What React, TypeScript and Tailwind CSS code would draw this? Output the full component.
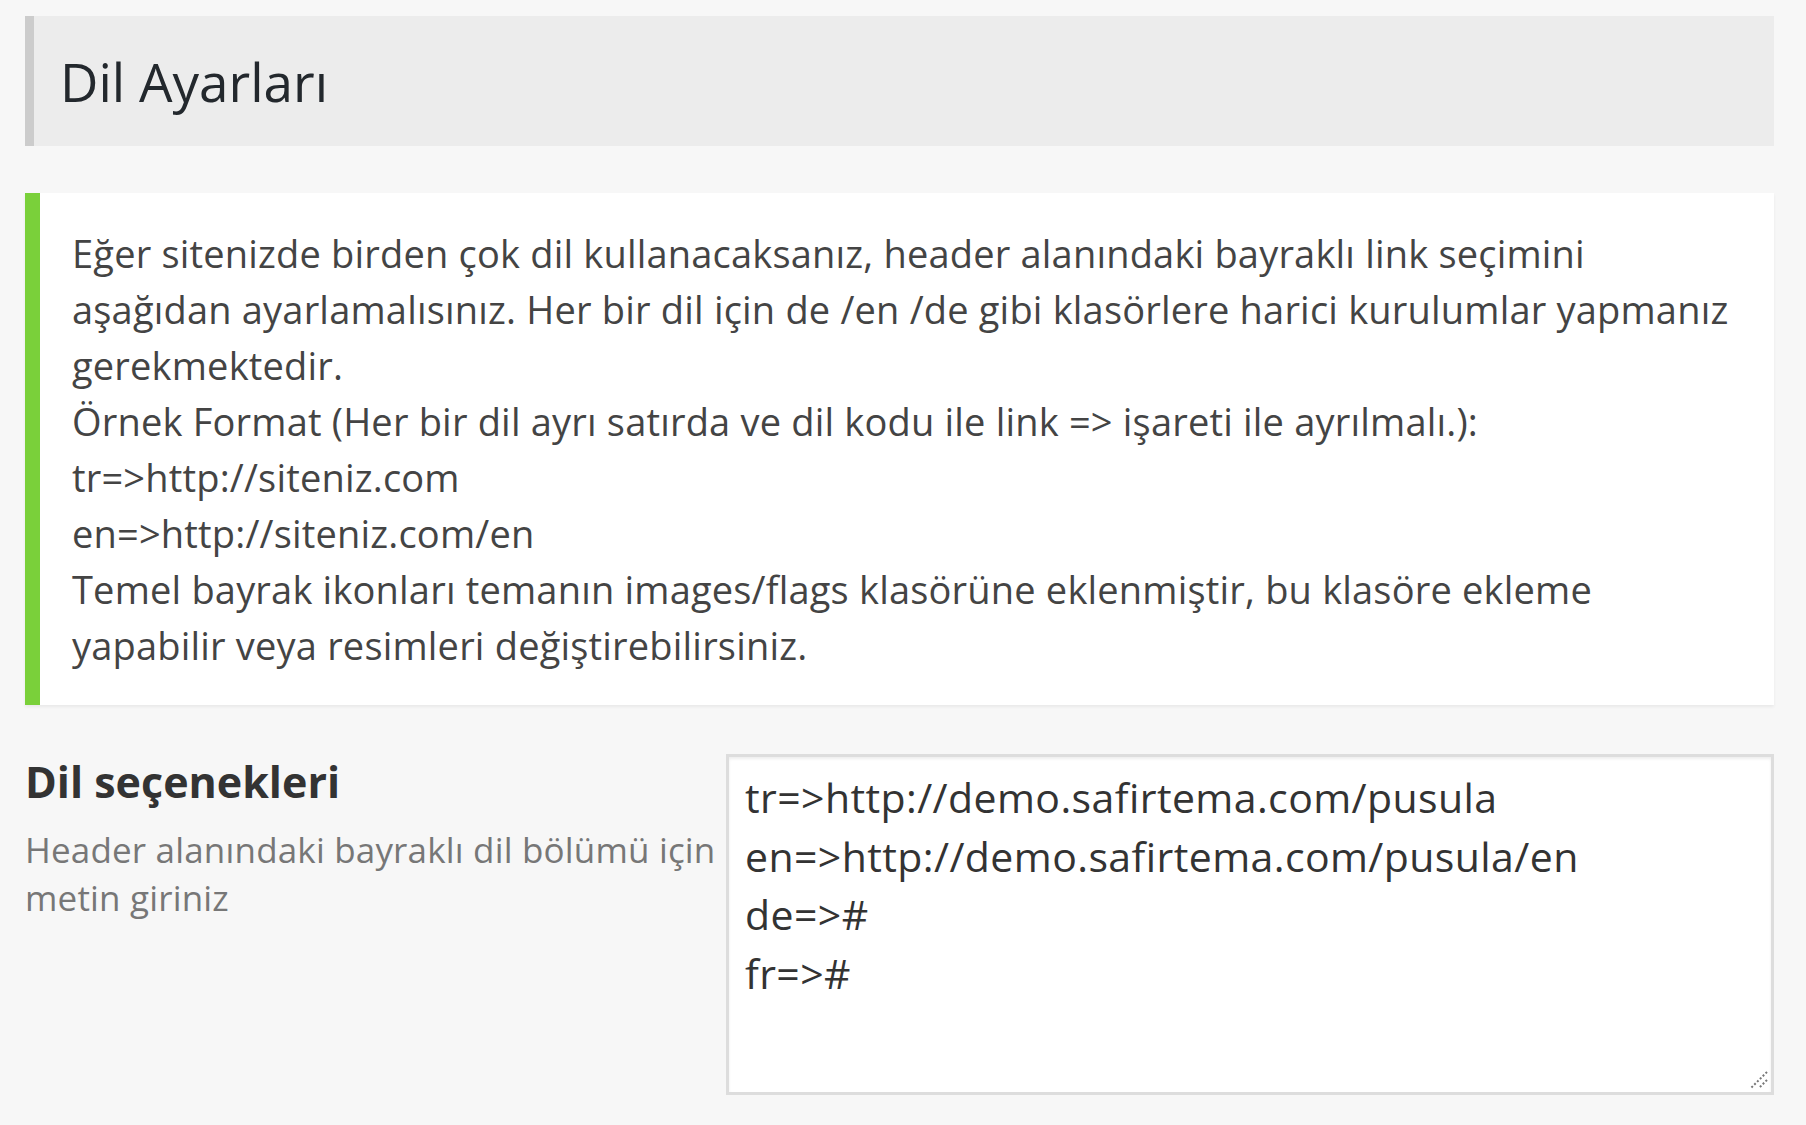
const notice = [
  "Eğer sitenizde birden çok dil kullanacaksanız, header alanındaki bayraklı link seçimini",
  "aşağıdan ayarlamalısınız. Her bir dil için de /en /de gibi klasörlere harici kurulumlar yapmanız",
  "gerekmektedir.",
  "Örnek Format (Her bir dil ayrı satırda ve dil kodu ile link => işareti ile ayrılmalı.):",
  "tr=>http://siteniz.com",
  "en=>http://siteniz.com/en",
  "Temel bayrak ikonları temanın images/flags klasörüne eklenmiştir, bu klasöre ekleme",
  "yapabilir veya resimleri değiştirebilirsiniz.",
]

const langs = `tr=>http://demo.safirtema.com/pusula
en=>http://demo.safirtema.com/pusula/en
de=>#
fr=>#`

export default function App() {
  return (
    <div className="min-h-[1125px] bg-[#f7f7f7] pl-[25px] pr-[32px] pt-[16px] font-['Open_Sans','Noto_Sans',sans-serif]">
      <div className="flex h-[130px] items-center border-l-[9px] border-[#cccccc] bg-[#ececec] pl-[26px]">
        <h2 className="text-[53px] leading-none text-[#23282d]">Dil Ayarları</h2>
      </div>

      <div className="mt-[47px] border-l-[15px] border-[#7ad03a] bg-white py-[32px] pl-[32px] pr-[20px] shadow-[0_2px_3px_rgba(0,0,0,0.06)]">
        {notice.map((line, i) => (
          <p key={i} className="whitespace-nowrap text-[38px] leading-[56px] tracking-[0.005em] text-[#444444]">
            {line}
          </p>
        ))}
      </div>

      <div className="mt-[49px] flex">
        <div className="w-[701px] shrink-0">
          <h3 className="text-[43px] font-bold leading-[56px] text-[#333333]">Dil seçenekleri</h3>
          <p className="mt-[16px] whitespace-nowrap text-[35px] leading-[48px] tracking-[0.005em] text-[#777777]">
            Header alanındaki bayraklı dil bölümü için
            <br />
            metin giriniz
          </p>
        </div>
        <div className="relative h-[341px] flex-1">
          <textarea
            readOnly
            defaultValue={langs}
            className="block h-full w-full resize-none border-[3px] border-[#dddddd] bg-white px-[16px] pt-[11px] text-[41px] leading-[58.5px] tracking-[0.01em] text-[#333333] shadow-[inset_0_2px_3px_rgba(0,0,0,0.07)] outline-none"
          />
          <svg className="pointer-events-none absolute bottom-[6px] right-[6px]" width="20" height="20" viewBox="0 0 20 20">
            <path d="M19 3 L3 19 M19 11 L11 19" stroke="#777" strokeWidth="2" strokeDasharray="2 2" fill="none" />
          </svg>
        </div>
      </div>
    </div>
  )
}
